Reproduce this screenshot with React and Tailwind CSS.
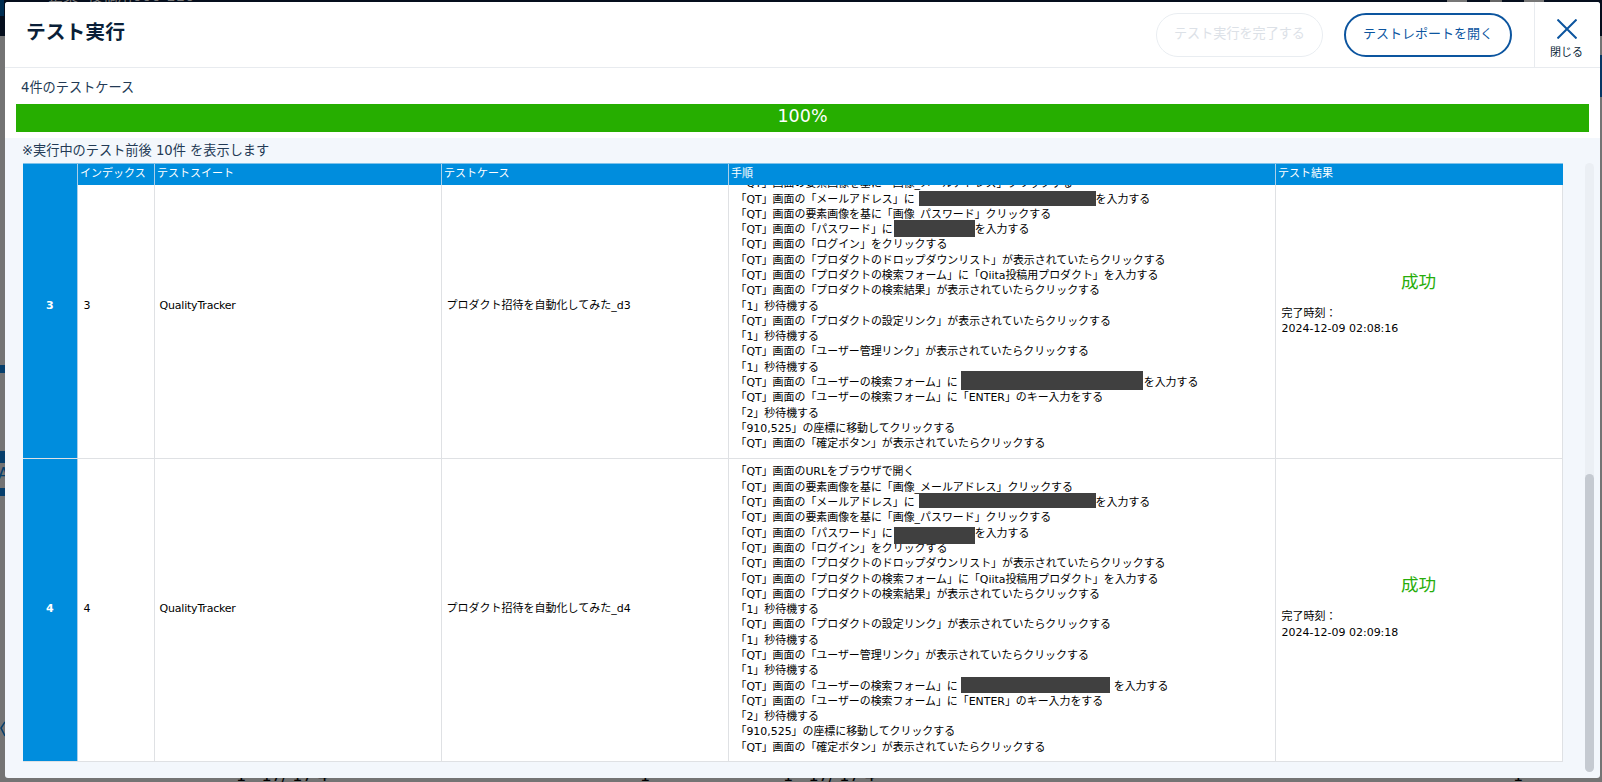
import React from 'react';

const HIDDEN = {
  3: {
    mail: <Redacted space="w-[181px]" box="left-[4px] w-[177px] top-[-12px] h-[15px]" />,
    password: <Redacted space="w-[82px]" box="left-[1px] w-[81px] top-[-13px] h-[17px]" />,
    user: <Redacted space="w-[186px]" box="left-[3px] w-[182px] top-[-15px] h-[19px]" />,
  },
  4: {
    mail: <Redacted space="w-[181px]" box="left-[4px] w-[177px] top-[-13px] h-[15px]" />,
    password: <Redacted space="w-[82px]" box="left-[1px] w-[81px] top-[-10px] h-[17px]" />,
    user: <Redacted space="w-[156px]" box="left-[3px] w-[149px] top-[-13px] h-[16px]" />,
  },
};

const getSteps = (id) => [
  ['「QT」画面のURLをブラウザで開く'],
  ['「QT」画面の要素画像を基に「画像_メールアドレス」クリックする'],
  ['「QT」画面の「メールアドレス」に', HIDDEN[id].mail, 'を入力する'],
  ['「QT」画面の要素画像を基に「画像_パスワード」クリックする'],
  ['「QT」画面の「パスワード」に', HIDDEN[id].password, 'を入力する'],
  ['「QT」画面の「ログイン」をクリックする'],
  ['「QT」画面の「プロダクトのドロップダウンリスト」が表示されていたらクリックする'],
  ['「QT」画面の「プロダクトの検索フォーム」に「Qiita投稿用プロダクト」を入力する'],
  ['「QT」画面の「プロダクトの検索結果」が表示されていたらクリックする'],
  ['「1」秒待機する'],
  ['「QT」画面の「プロダクトの設定リンク」が表示されていたらクリックする'],
  ['「1」秒待機する'],
  ['「QT」画面の「ユーザー管理リンク」が表示されていたらクリックする'],
  ['「1」秒待機する'],
  ['「QT」画面の「ユーザーの検索フォーム」に', HIDDEN[id].user, 'を入力する'],
  ['「QT」画面の「ユーザーの検索フォーム」に「ENTER」のキー入力をする'],
  ['「2」秒待機する'],
  ['「910,525」の座標に移動してクリックする'],
  ['「QT」画面の「確定ボタン」が表示されていたらクリックする'],
];

const ROWS = [
  { id: 3, suite: 'QualityTracker', name: 'プロダクト招待を自動化してみた_d3', time: '2024-12-09 02:08:16' },
  { id: 4, suite: 'QualityTracker', name: 'プロダクト招待を自動化してみた_d4', time: '2024-12-09 02:09:18' },
];

const HEADERS = ['', 'インデックス', 'テストスイート', 'テストケース', '手順', 'テスト結果'];

function Redacted({ space, box }) {
  return (
    <span className={`relative inline-block h-0 ${space}`}>
      <span className={`absolute bg-[#404040] ${box}`} />
    </span>
  );
}

function ResultRow({ row }) {
  return (
    <div className="grid h-[303.5px] shrink-0 grid-cols-[54.5px_77px_287px_287px_547px_287px] border-b border-[#dfe1e4] bg-white text-black">
      <div className="flex items-center justify-center border-r border-[#a9cfe9] bg-[#008ddd] pb-0.5 font-bold text-white">
        {row.id}
      </div>
      <div className="flex items-center border-r border-[#dfe1e4] pb-0.5 pl-1.5">{row.id}</div>
      <div className="flex items-center border-r border-[#dfe1e4] pb-0.5 pl-[5px] tracking-[-0.2px]">{row.suite}</div>
      <div className="flex items-center border-r border-[#dfe1e4] pb-0.5 pl-[5px]">{row.name}</div>
      <div className="flex flex-col justify-center border-r border-[#dfe1e4] pl-[7px] text-[10.93px]">
        {getSteps(row.id).map((parts, i) => (
          <div key={i} className="h-[15.3px] whitespace-nowrap">
            {parts.map((part, j) => (
              <React.Fragment key={j}>{part}</React.Fragment>
            ))}
          </div>
        ))}
      </div>
      <div className="flex flex-col justify-center border-r border-[#dfe1e4] px-1.5 pb-[6px]">
        <div className="mb-[12px] text-center text-[17.6px] leading-6 text-[#27ad0a]">成功</div>
        <div>完了時刻：</div>
        <div>{row.time}</div>
      </div>
    </div>
  );
}

export default function App() {
  return (
    <div className="relative h-[782px] w-[1602px] overflow-hidden bg-[#747474] font-['DejaVu_Sans','Noto_Sans_CJK_JP',sans-serif] text-[11px] leading-[15.3px]">
      {/* Dimmed page behind the dialog */}
      <div className="absolute inset-x-0 top-0 h-9 overflow-hidden bg-[#050e1d]">
        <div className="absolute top-[-11px] left-[48px] text-[15px] leading-[15px] whitespace-pre text-[#777]">企業  投稿用000 110</div>
        <div className="absolute top-0 left-0 h-4 w-1 bg-[#002e52]" />
        <div className="absolute top-0 left-[1447px] h-[2px] w-[20px] bg-[#777]" />
        <div className="absolute top-0 left-[1490px] h-[2px] w-[12px] bg-[#666]" />
        <div className="absolute top-0 left-[1524px] h-[2px] w-[20px] bg-[#777]" />
      </div>
      <div className="absolute top-[365px] left-0 h-[8px] w-[5px] bg-[#063f6c]" />
      <div className="absolute top-[451px] left-0 h-[12px] w-[5px] bg-[#063f6c]" />
      <div className="absolute top-[465px] left-[-2px] text-[16px] leading-[18px] text-[#063f6c]">A</div>
      <div className="absolute top-[488px] left-0 h-[8px] w-[5px] bg-[#063f6c]" />
      <svg className="absolute top-[720px] left-0" width="5" height="20" viewBox="0 0 5 20" fill="none" stroke="#063f6c" strokeWidth="1.5">
        <path d="M5 2L1 8L5 16" />
      </svg>
      <div className="absolute top-[55px] left-[1599px] h-[42px] w-[3px] bg-[#063764]" />
      <div className="absolute top-[768px] left-[236px] text-[16px] leading-[15px] whitespace-pre text-black">{'1   17/ 17 4'}</div>
      <div className="absolute top-[768px] left-[640px] text-[16px] leading-[15px] text-black">1</div>
      <div className="absolute top-[768px] left-[783px] text-[16px] leading-[15px] whitespace-pre text-black">{'1   17/ 17 4'}</div>
      <div className="absolute top-[768px] left-[1513px] text-[16px] leading-[15px] text-black">1</div>

      {/* Dialog */}
      <div className="absolute top-[2px] left-[4.5px] flex h-[776px] w-[1595.5px] flex-col overflow-hidden rounded-[3px] bg-[#f3f7fc]">
        <header className="flex h-[66px] shrink-0 border-b border-[#e8ebef] bg-white">
          <h1 className="mr-auto pt-[16px] pl-[21.5px] text-[19.8px] leading-[30px] font-bold text-[#0a1f38]">テスト実行</h1>
          <button className="mt-[11px] mr-[21px] h-[44px] w-[167px] rounded-full border border-[#e9edf1] pb-[3px] text-[13.1px] text-[#dce1e7]">
            テスト実行を完了する
          </button>
          <button className="mt-[11px] mr-[22px] h-[44px] w-[168px] rounded-full border-2 border-[#0c559f] pb-[3px] text-[13px] text-[#0c559f]">
            テストレポートを開く
          </button>
          <button className="flex w-[66px] flex-col items-center border-l border-[#e8ebef] pt-[17px] pr-0.5 text-[#0a1f38]">
            <svg width="20" height="20" viewBox="0 0 20 20" fill="none" stroke="#0c559f" strokeWidth="2">
              <path d="M0.5 0.5L19.5 19.5M19.5 0.5L0.5 19.5" />
            </svg>
            <span className="mt-[6px]">閉じる</span>
          </button>
        </header>

        <section className="h-[70px] shrink-0 bg-white">
          <div className="flex h-[36px] items-center pt-[3px] pl-[16.5px] text-[13.2px] text-[#233a55]">4件のテストケース</div>
          <div className="mr-[11px] ml-[11.5px] h-[28px] bg-[#26ae00] text-center text-[17.5px] leading-[24px] text-white">100%</div>
        </section>

        <section className="flex min-h-0 flex-1 flex-col pl-[18.5px]">
          <div className="flex h-[25px] shrink-0 items-center text-[13.2px] text-[#233a55]">
            <span className="ml-[-1px]">※実行中のテスト前後 10件 を表示します</span>
          </div>
          <div className="flex h-[609px] shrink-0">
            <div className="flex h-[599px] w-[1539.5px] shrink-0 flex-col">
              <div className="grid h-[22px] shrink-0 grid-cols-[54.5px_77px_287px_287px_547px_287px] border-t border-[#7fc2ea] bg-[#008ddd] text-white">
                {HEADERS.map((label, i) => (
                  <div key={i} className={`flex items-center pb-0.5 pl-[2.5px] ${i === 5 ? '' : 'border-r border-[#a9cfe9]'}`}>
                    {label}
                  </div>
                ))}
              </div>
              {/* Scrolled to the bottom */}
              <div className="flex min-h-0 flex-1 flex-col justify-end overflow-hidden">
                {ROWS.map((row) => (
                  <ResultRow key={row.id} row={row} />
                ))}
              </div>
            </div>
            <div className="ml-[22.5px] flex h-full w-[9px] flex-col justify-end rounded-full bg-[#ebeff4]">
              <div className="h-[298px] rounded-full bg-[#c5cad1]" />
            </div>
          </div>
        </section>
      </div>
    </div>
  );
}
